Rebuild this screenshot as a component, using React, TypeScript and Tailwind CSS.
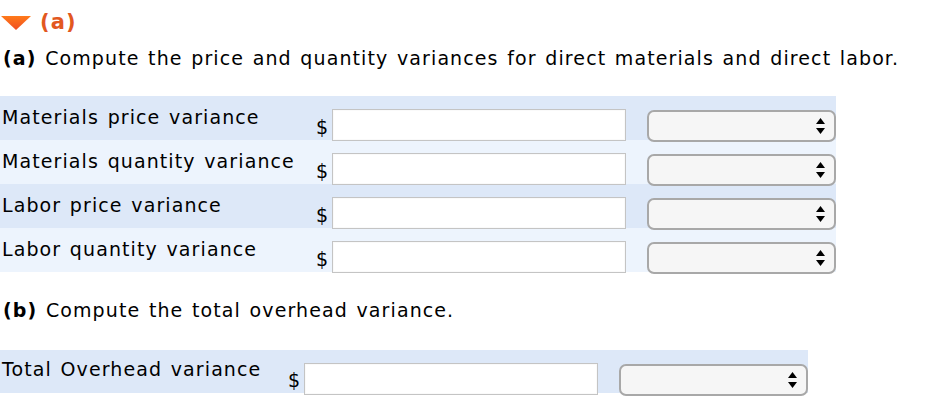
import React from "react";

const font = {
  fontFamily: '"DejaVu Sans", Verdana, sans-serif',
  letterSpacing: "1.1px",
  wordSpacing: "1.5px",
};

function SelectBox() {
  return (
    <div className="w-[189px] h-[32px] rounded-[7px] border-2 border-[#a8a8a8] bg-[#f6f6f6] flex items-center justify-end pr-[9px]">
      <svg width="9" height="16" viewBox="0 0 9 16">
        <polygon points="4.5,0 9,6 0,6" fill="#000" />
        <polygon points="0,10 9,10 4.5,16" fill="#000" />
      </svg>
    </div>
  );
}

function Row({
  label,
  bg,
  labelW,
  h = "h-[44px]",
  pt = "pt-[10px]",
}: {
  label: string;
  bg: string;
  labelW: string;
  h?: string;
  pt?: string;
}) {
  return (
    <div className={`flex ${h} ${bg}`}>
      <div className={`${labelW} pl-[2px] ${pt} text-[19px] leading-[22px] text-black`}>{label}</div>
      <div className="w-[19px] self-end text-[19px] leading-[22px] pb-[2px] pl-[3px] text-black">$</div>
      <div className="pt-[13px]">
        <div className="w-[294px] h-[32px] border border-[#c4c4c4] bg-white shadow-[inset_0_0_0_1px_#fafafa]" />
      </div>
      <div className="pt-[14px] pl-[21px]">
        <SelectBox />
      </div>
    </div>
  );
}

export default function App() {
  return (
    <div className="w-[936px] h-[416px] bg-white text-black" style={font}>
      <div className="flex items-center h-[28px] mt-[9px]">
        <svg width="30" height="14" viewBox="0 0 30 14" className="ml-[1px]">
          <defs>
            <linearGradient id="g" x1="0" y1="0" x2="0" y2="1">
              <stop offset="0" stopColor="#ff7a1a" />
              <stop offset="1" stopColor="#f04e23" />
            </linearGradient>
          </defs>
          <polygon points="0,0 30,0 15,14" fill="url(#g)" />
        </svg>
        <span className="ml-[9px] text-[21px] font-bold text-[#e2581f]">(a)</span>
      </div>
      <div className="mt-[9px] pl-[3px] text-[19px] leading-[24px]">
        <span className="font-bold">(a)</span> Compute the price and quantity variances for direct materials and direct labor.
      </div>
      <div className="mt-[26px] w-[836px]">
        <Row label="Materials price variance" bg="bg-[#dde8f8]" labelW="w-[313px]" />
        <Row label="Materials quantity variance" bg="bg-[#edf4fd]" labelW="w-[313px]" />
        <Row label="Labor price variance" bg="bg-[#dde8f8]" labelW="w-[313px]" />
        <Row label="Labor quantity variance" bg="bg-[#edf4fd]" labelW="w-[313px]" />
      </div>
      <div className="mt-[26px] pl-[3px] text-[19px] leading-[24px]">
        <span className="font-bold">(b)</span> Compute the total overhead variance.
      </div>
      <div className="mt-[28px] w-[808px]">
        <Row label="Total Overhead variance" bg="bg-[#dde8f8]" labelW="w-[285px]" h="h-[43px]" pt="pt-[8px]" />
      </div>
    </div>
  );
}
